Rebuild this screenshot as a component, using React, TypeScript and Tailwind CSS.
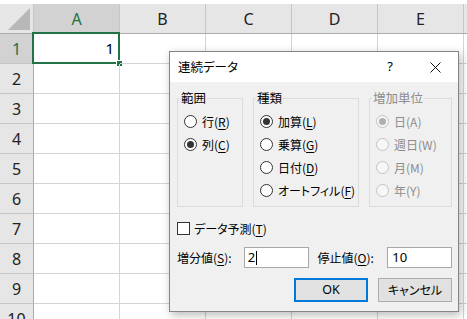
const COLS = ['A', 'B', 'C', 'D', 'E'];
const ROWS = [1, 2, 3, 4, 5, 6, 7, 8, 9, 10];

function Radio({ checked = false, disabled = false }: { checked?: boolean; disabled?: boolean }) {
  return (
    <span
      className={`flex h-[13px] w-[13px] shrink-0 items-center justify-center rounded-full border ${
        disabled ? 'border-[#c4c4c4] bg-[#f7f7f7]' : 'border-[#333333] bg-white'
      }`}
    >
      {checked && (
        <span className={`h-[7px] w-[7px] rounded-full ${disabled ? 'bg-[#b0b0b0]' : 'bg-[#333333]'}`} />
      )}
    </span>
  );
}

function Option({
  label,
  accel,
  checked,
  disabled,
}: {
  label: string;
  accel: string;
  checked?: boolean;
  disabled?: boolean;
}) {
  return (
    <div className={`flex h-[23px] items-center gap-[5px] whitespace-nowrap ${disabled ? 'text-[#8d8d8d]' : ''}`}>
      <Radio checked={checked} disabled={disabled} />
      <span>
        {label}(
        {disabled ? accel : <u className="underline-offset-[2px]">{accel}</u>})
      </span>
    </div>
  );
}

function Group({
  title,
  width,
  disabled,
  children,
}: {
  title: string;
  width: string;
  disabled?: boolean;
  children: React.ReactNode;
}) {
  return (
    <fieldset className={`h-[117px] min-w-0 shrink-0 border border-[#dcdcdc] ${width}`}>
      <legend className={`ml-[2px] px-[1px] text-[12.5px] leading-[16px] ${disabled ? 'text-[#8d8d8d]' : ''}`}>
        {title}
      </legend>
      <div className="flex flex-col px-[6px] pt-[4px]">{children}</div>
    </fieldset>
  );
}

function SeriesDialog() {
  return (
    <div className="absolute left-[169px] top-[51px] flex h-[261px] w-[290px] flex-col border border-[#858585] bg-[#f0f0f0] font-['Noto_Sans_CJK_JP',sans-serif] text-[12px] text-black shadow-[2px_3px_9px_rgba(0,0,0,0.28)] [font-feature-settings:'palt']">
      {/* title bar */}
      <div className="flex h-[30px] shrink-0 items-center bg-white pl-[8px] text-[12.5px]">
        <span className="flex-1">連続データ</span>
        <span className="w-[46px] pl-[2px] text-center font-['Noto_Sans',sans-serif] text-[13px]">?</span>
        <span className="flex w-[46px] justify-center">
          <svg width="11" height="11" viewBox="0 0 11 11">
            <path d="M0.5 0.5 L10.5 10.5 M10.5 0.5 L0.5 10.5" stroke="#111" strokeWidth="1" />
          </svg>
        </span>
      </div>

      <div className="flex flex-col pl-[7px] pr-[6px] pt-[8px]">
        <div className="flex gap-[10px]">
          <Group title="範囲" width="w-[66px]">
            <Option label="行" accel="R" />
            <Option label="列" accel="C" checked />
          </Group>
          <Group title="種類" width="w-[106px]">
            <Option label="加算" accel="L" checked />
            <Option label="乗算" accel="G" />
            <Option label="日付" accel="D" />
            <Option label="オートフィル" accel="F" />
          </Group>
          <Group title="増加単位" width="w-[83px]" disabled>
            <Option label="日" accel="A" checked disabled />
            <Option label="週日" accel="W" disabled />
            <Option label="月" accel="M" disabled />
            <Option label="年" accel="Y" disabled />
          </Group>
        </div>

        <div className="mt-[15px] flex h-[13px] items-center gap-[4px]">
          <span className="h-[13px] w-[13px] border border-[#333333] bg-white" />
          <span>
            データ予測(<u className="underline-offset-[2px]">T</u>)
          </span>
        </div>

        <div className="mt-[12px] flex h-[21px] items-center">
          <span className="w-[67px]">
            増分値(<u className="underline-offset-[2px]">S</u>):
          </span>
          <div className="flex h-[21px] w-[65px] items-center border border-[#a8a8a8] bg-white pl-[3px] font-['Noto_Sans',sans-serif] text-[13px]">
            2<span className="ml-[1px] h-[14px] w-px bg-black" />
          </div>
          <span className="ml-[9px] w-[70px]">
            停止値(<u className="underline-offset-[2px]">O</u>):
          </span>
          <div className="flex h-[21px] w-[65px] items-center border border-[#a8a8a8] bg-white pl-[4px] font-['Noto_Sans',sans-serif] text-[13px]">
            10
          </div>
        </div>

        <div className="mt-[10px] flex justify-end gap-[10px]">
          <button className="h-[24px] w-[74px] border-2 border-[#0078d7] bg-[#e1e1e1] font-['Noto_Sans',sans-serif] text-[12.5px]">
            OK
          </button>
          <button className="h-[24px] w-[74px] border border-[#adadad] bg-[#e1e1e1]">キャンセル</button>
        </div>
      </div>
    </div>
  );
}

export default function App() {
  return (
    <div className="relative h-[319px] w-[467px] overflow-hidden bg-white font-['Noto_Sans',sans-serif]">
      <div className="h-[4px]" />
      {/* column headers */}
      <div className="flex h-[30px] border-b border-[#ababab] bg-[#e6e6e6]">
        <div className="relative w-[34px] shrink-0 border-r border-[#c6c6c6]">
          <svg className="absolute bottom-[3px] right-[3px]" width="22" height="22" viewBox="0 0 22 22">
            <polygon points="22,0 22,22 0,22" fill="#b8b8b8" />
          </svg>
        </div>
        {COLS.map((c) => (
          <div
            key={c}
            className={`flex w-[86px] shrink-0 items-center justify-center border-r border-[#c6c6c6] text-[16px] ${
              c === 'A' ? 'bg-[#d2d2d2] text-[#217346]' : 'text-[#222222]'
            }`}
          >
            {c}
          </div>
        ))}
        <div className="flex-1" />
      </div>

      {/* rows */}
      {ROWS.map((r) => (
        <div key={r} className="flex h-[30px]">
          <div
            className={`flex w-[34px] shrink-0 items-center justify-center border-b border-r border-b-[#c6c6c6] border-r-[#ababab] text-[16px] ${
              r === 1 ? 'bg-[#d2d2d2] text-[#217346]' : 'bg-[#e6e6e6] text-[#222222]'
            }`}
          >
            {r}
          </div>
          {COLS.map((c) => (
            <div key={c} className="relative w-[86px] shrink-0 border-b border-r border-[#d4d4d4]">
              {r === 1 && c === 'A' && (
                <>
                  <div className="flex h-full items-center justify-end pr-[5px] text-[15px] text-black">1</div>
                  <div className="absolute -bottom-[1px] -left-[2px] -right-[1px] -top-[2px] border-2 border-[#217346]" />
                  <div className="absolute -bottom-[4px] -right-[4px] h-[7px] w-[7px] border border-white bg-[#217346]" />
                </>
              )}
            </div>
          ))}
          <div className="flex-1 border-b border-[#d4d4d4]" />
        </div>
      ))}

      <SeriesDialog />
    </div>
  );
}
